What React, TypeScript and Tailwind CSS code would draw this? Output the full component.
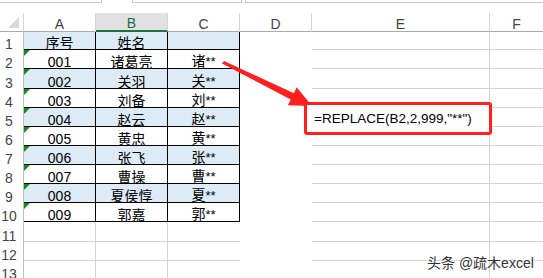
import React from "react";

type Row = { h: number; a: string; b: string; c: string; blue: boolean; tri: boolean };

const rows: Row[] = [
  { h: 18, a: "序号", b: "姓名", c: "", blue: true, tri: false },
  { h: 19, a: "001", b: "诸葛亮", c: "诸", blue: false, tri: true },
  { h: 20, a: "002", b: "关羽", c: "关", blue: true, tri: true },
  { h: 19, a: "003", b: "刘备", c: "刘", blue: false, tri: true },
  { h: 19, a: "004", b: "赵云", c: "赵", blue: true, tri: true },
  { h: 19, a: "005", b: "黄忠", c: "黄", blue: false, tri: true },
  { h: 19, a: "006", b: "张飞", c: "张", blue: true, tri: true },
  { h: 19, a: "007", b: "曹操", c: "曹", blue: false, tri: true },
  { h: 19, a: "008", b: "夏侯惇", c: "夏", blue: true, tri: true },
  { h: 19, a: "009", b: "郭嘉", c: "郭", blue: false, tri: true },
];

const emptyHeights = [20, 19, 19];

function RowHeader({ n }: { n: number }) {
  return (
    <div className="w-[24px] shrink-0 h-full border-r border-[#bdbdbd] flex items-end justify-center pr-[5px] text-[14px] leading-[12px] text-[#444]">
      {n}
    </div>
  );
}

export default function App() {
  return (
    <div
      className="relative w-[543px] h-[278px] overflow-hidden bg-white text-black"
      style={{ fontFamily: '"Liberation Sans", "Noto Sans CJK SC", sans-serif' }}
    >
      {/* formula bar remnants */}
      <div className="flex h-[3px]">
        <div className="w-[102px] border-r border-b border-[#c6c6c6]" />
        <div className="w-[30px]" />
        <div className="w-[110px] border-l border-r border-b border-[#c6c6c6]" />
        <div className="w-[3px]" />
        <div className="flex-1 border-l border-b border-[#c6c6c6]" />
      </div>
      <div className="h-[10px]" />

      {/* column headers */}
      <div className="flex h-[19px] text-[14px] leading-[14px] text-[#444]">
        <div className="w-[24px] shrink-0 border-r border-b border-[#d4d4d4] border-b-[#ababab] relative">
          <svg className="absolute left-[7px] top-[3px]" width="13" height="13" viewBox="0 0 13 13">
            <polygon points="12,1 12,12 1,12" fill="#d9d9d9" />
          </svg>
        </div>
        <div className="w-[72px] shrink-0 border-r border-b border-[#d4d4d4] border-b-[#ababab] flex items-end justify-center">A</div>
        <div className="w-[72px] shrink-0 border-r border-[#d4d4d4] border-b-2 border-b-[#217346] bg-[#e1e1e1] text-[#1d6a3f] flex items-end justify-center">B</div>
        <div className="w-[72px] shrink-0 border-r border-b border-[#d4d4d4] border-b-[#ababab] flex items-end justify-center">C</div>
        <div className="w-[72px] shrink-0 border-r border-b border-[#d4d4d4] border-b-[#ababab] flex items-end justify-center">D</div>
        <div className="w-[178px] shrink-0 border-r border-b border-[#d4d4d4] border-b-[#ababab] flex items-end justify-center">E</div>
        <div className="flex-1 border-b border-[#ababab] flex items-end justify-center">F</div>
      </div>

      {/* data rows */}
      {rows.map((r, i) => {
        const bg = r.blue ? "bg-[#ddebf7]" : "bg-white";
        return (
          <div key={i} className="flex text-[14px] leading-[12px]" style={{ height: r.h }}>
            <RowHeader n={i + 1} />
            <div className={`relative w-[72px] shrink-0 border-r border-b border-black flex items-end justify-center ${bg}`}>
              {r.tri && (
                <svg className="absolute left-0 top-0" width="6" height="6" viewBox="0 0 6 6">
                  <polygon points="0,0 6,0 0,6" fill="#138a1d" />
                </svg>
              )}
              {r.a}
            </div>
            <div className={`w-[72px] shrink-0 border-r border-b border-black flex items-end justify-center ${bg}`}>{r.b}</div>
            <div className={`w-[72px] shrink-0 border-r border-b border-black flex items-end justify-center ${bg}`}>
              {r.c && (
                <span>
                  {r.c}
                  <span className="text-[13px]">**</span>
                </span>
              )}
            </div>
            <div className="w-[72px] shrink-0 bg-white" />
            <div className="w-[178px] shrink-0 border-r border-b border-[#d4d4d4]" />
            <div className="flex-1 border-b border-[#d4d4d4]" />
          </div>
        );
      })}
      {emptyHeights.map((h, i) => (
        <div key={`e${i}`} className="flex text-[14px] leading-[12px]" style={{ height: h }}>
          <RowHeader n={11 + i} />
          <div className="w-[72px] shrink-0 border-r border-b border-[#d4d4d4]" />
          <div className="w-[72px] shrink-0 border-r border-b border-[#d4d4d4]" />
          <div className="w-[72px] shrink-0 border-b border-[#d4d4d4]" />
          <div className="w-[72px] shrink-0 bg-white" />
          <div className="w-[178px] shrink-0 border-r border-b border-[#d4d4d4]" />
          <div className="flex-1 border-b border-[#d4d4d4]" />
        </div>
      ))}

      {/* red arrow */}
      <svg className="absolute left-0 top-0 pointer-events-none" width="543" height="278" viewBox="0 0 543 278">
        <polygon
          points="222,63.5 224,61 293.9,93.2 296.7,87.3 312,106 287.9,105.3 290.7,99.4"
          fill="#ff1f1f"
        />
      </svg>

      {/* red formula box */}
      <div className="absolute left-[304px] top-[102px] w-[188px] h-[33px] border-[3px] border-[#ff1f1f] rounded-[3px] bg-white pl-[7px] pt-[6px] text-[13.5px] leading-[16px] text-black whitespace-nowrap">
        =REPLACE(B2,2,999,"**")
      </div>

      {/* watermark */}
      <div
        className="absolute left-[427px] top-[255px] text-[14px] leading-[16px] text-[#333] whitespace-nowrap"
        style={{ textShadow: "0 0 2px #fff, 0 0 2px #fff" }}
      >
        头条 @疏木excel
      </div>
    </div>
  );
}
